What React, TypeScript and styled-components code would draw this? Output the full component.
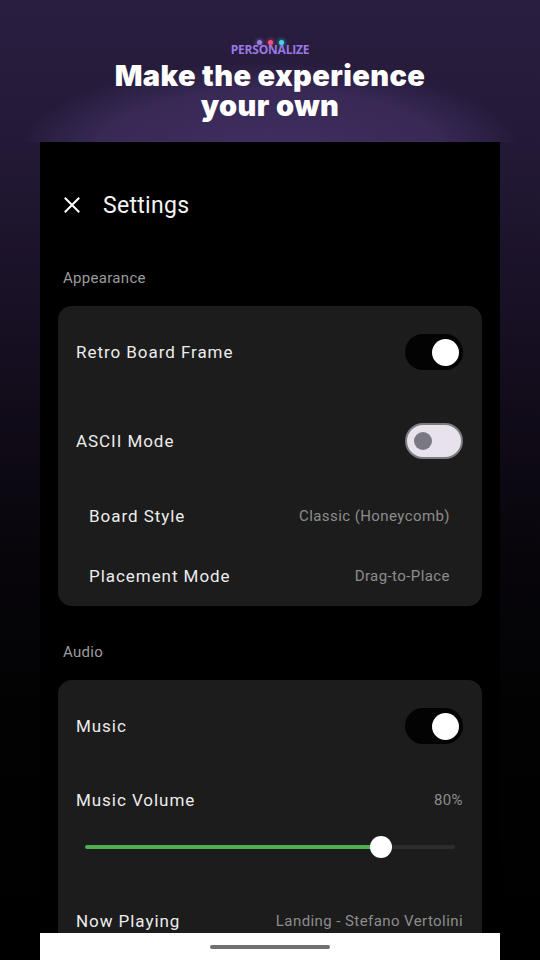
import React from "react";
import styled, { createGlobalStyle } from "styled-components";

const Global = createGlobalStyle`
  html, body { margin: 0; padding: 0; background: #000; }
  body { font-family: Roboto, "Noto Sans", sans-serif; -webkit-font-smoothing: antialiased; }
  * { box-sizing: border-box; }
`;

const Screen = styled.div`
  width: 540px;
  height: 960px;
  overflow: hidden;
  display: flex;
  flex-direction: column;
  background: linear-gradient(180deg, #2a1e40 0px, #231936 150px, #170f22 330px, #07050a 560px, #020202 720px, #000 960px);
`;

const Hero = styled.header`
  height: 142px;
  flex: 0 0 142px;
  display: flex;
  flex-direction: column;
  align-items: center;
  padding-top: 40px;
  background: radial-gradient(ellipse 250px 90px at 50% 152px, rgba(66, 48, 100, 0.95) 0%, rgba(60, 44, 92, 0.8) 70%, rgba(52, 38, 80, 0.3) 94%, rgba(52, 38, 80, 0) 100%);
`;

const Dots = styled.div`
  display: flex;
  gap: 6px;
  height: 5px;
`;

const Dot = styled.span<{ $c: string }>`
  width: 5px;
  height: 5px;
  border-radius: 50%;
  background: ${(p) => p.$c};
  box-shadow: 0 0 4px ${(p) => p.$c};
`;

const Eyebrow = styled.div`
  font-family: "Open Sans", "Noto Sans", sans-serif;
  font-weight: 700;
  font-size: 12px;
  line-height: 14px;
  color: #9a78e4;
  letter-spacing: -0.2px;
  margin-top: -2px;
`;

const Title = styled.h1`
  margin: 4px 0 0;
  font-family: Inter, "Noto Sans", sans-serif;
  font-weight: 900;
  font-size: 29px;
  line-height: 30px;
  color: #ffffff;
  text-align: center;
  letter-spacing: 0.4px;
`;

const TitleLine = styled.span`
  display: block;
`;

const Panel = styled.main`
  flex: 1;
  margin: 0 40px;
  background: #000;
  display: flex;
  flex-direction: column;
  overflow: hidden;
`;

const Scroll = styled.div`
  flex: 1;
  overflow: hidden;
  display: flex;
  flex-direction: column;
`;

const TopBar = styled.div`
  height: 56px;
  margin-top: 35px;
  display: flex;
  align-items: center;
  padding-left: 24px;
  gap: 23px;
  flex: 0 0 auto;
`;

const Heading = styled.div`
  font-size: 23px;
  color: #f4f4f4;
  font-weight: 400;
  letter-spacing: 0.3px;
`;

const SectionLabel = styled.div<{ $mt: number }>`
  margin-top: ${(p) => p.$mt}px;
  padding-left: 23px;
  font-size: 15px;
  line-height: 20px;
  color: #9c9c9c;
  letter-spacing: 0.3px;
  flex: 0 0 auto;
`;

const Card = styled.section`
  margin: 18px 18px 0;
  background: #1c1c1c;
  border-radius: 14px;
  display: flex;
  flex-direction: column;
  padding-top: 10px;
  flex: 0 0 auto;
`;

const Row = styled.div<{ $h: number; $mt?: number; $inset?: number }>`
  height: ${(p) => p.$h}px;
  margin-top: ${(p) => p.$mt ?? 0}px;
  padding: 0 ${(p) => p.$inset ?? 19}px 0 ${(p) => (p.$inset ?? 19) - 1}px;
  display: flex;
  align-items: center;
  justify-content: space-between;
  flex: 0 0 auto;
`;

const Label = styled.span`
  font-size: 17px;
  color: #ececec;
  letter-spacing: 0.95px;
`;

const Value = styled.span<{ $size?: number }>`
  font-size: ${(p) => p.$size ?? 15}px;
  color: #8c8c8c;
  letter-spacing: 0.42px;
`;

const Track = styled.div<{ $on: boolean }>`
  width: 58px;
  height: 36px;
  border-radius: 18px;
  display: flex;
  align-items: center;
  justify-content: ${(p) => (p.$on ? "flex-end" : "flex-start")};
  padding: 0 ${(p) => (p.$on ? 4 : 7)}px;
  background: ${(p) => (p.$on ? "#030303" : "#e7e2ec")};
  border: ${(p) => (p.$on ? "none" : "2px solid #7c7b80")};
`;

const Knob = styled.span<{ $on: boolean }>`
  width: ${(p) => (p.$on ? 27 : 18)}px;
  height: ${(p) => (p.$on ? 27 : 18)}px;
  border-radius: 50%;
  background: ${(p) => (p.$on ? "#ffffff" : "#7a7880")};
`;

const Toggle = ({ on }: { on: boolean }) => (
  <Track $on={on}>
    <Knob $on={on} />
  </Track>
);

const SliderRow = styled.div`
  height: 30px;
  margin-top: 17px;
  padding: 0 27px;
  display: flex;
  align-items: center;
  flex: 0 0 auto;
`;

const Fill = styled.div`
  height: 4px;
  border-radius: 2px 0 0 2px;
  background: #4caf50;
`;

const Rest = styled.div`
  flex: 1;
  height: 4px;
  border-radius: 0 2px 2px 0;
  background: #2d2d2d;
`;

const Thumb = styled.div`
  width: 22px;
  height: 22px;
  border-radius: 50%;
  background: #ffffff;
  margin: 0 -11px;
  position: relative;
  z-index: 1;
  flex: 0 0 auto;
`;

const NavBar = styled.div`
  height: 27px;
  flex: 0 0 27px;
  background: #ffffff;
  display: flex;
  align-items: center;
  justify-content: center;
`;

const Pill = styled.div`
  width: 120px;
  height: 4px;
  border-radius: 2px;
  background: #707070;
`;

const CloseIcon = () => (
  <svg width="16" height="16" viewBox="0 0 16 16" fill="none">
    <path d="M1.5 1.5 L14.5 14.5 M14.5 1.5 L1.5 14.5" stroke="#ffffff" strokeWidth="2" strokeLinecap="square" />
  </svg>
);

export default function App() {
  const volume = 80;
  return (
    <>
      <Global />
      <Screen>
        <Hero>
          <Dots>
            <Dot $c="#9b7be8" />
            <Dot $c="#f2547e" />
            <Dot $c="#3ed9ea" />
          </Dots>
          <Eyebrow>PERSONALIZE</Eyebrow>
          <Title>
            <TitleLine>Make the experience</TitleLine>
            <TitleLine>your own</TitleLine>
          </Title>
        </Hero>
        <Panel>
          <Scroll>
            <TopBar>
              <CloseIcon />
              <Heading>Settings</Heading>
            </TopBar>
            <SectionLabel $mt={35}>Appearance</SectionLabel>
            <Card>
              <Row $h={72}>
                <Label>Retro Board Frame</Label>
                <Toggle on />
              </Row>
              <Row $h={72} $mt={17}>
                <Label>ASCII Mode</Label>
                <Toggle on={false} />
              </Row>
              <Row $h={60} $mt={9} $inset={32}>
                <Label>Board Style</Label>
                <Value>Classic (Honeycomb)</Value>
              </Row>
              <Row $h={60} $inset={32}>
                <Label>Placement Mode</Label>
                <Value>Drag-to-Place</Value>
              </Row>
            </Card>
            <SectionLabel $mt={36}>Audio</SectionLabel>
            <Card>
              <Row $h={72}>
                <Label>Music</Label>
                <Toggle on />
              </Row>
              <Row $h={30} $mt={23}>
                <Label>Music Volume</Label>
                <Value $size={15}>{volume}%</Value>
              </Row>
              <SliderRow>
                <Fill style={{ width: `${volume}%` }} />
                <Thumb />
                <Rest />
              </SliderRow>
              <Row $h={72} $mt={23}>
                <Label>Now Playing</Label>
                <Value>Landing - Stefano Vertolini</Value>
              </Row>
            </Card>
          </Scroll>
          <NavBar>
            <Pill />
          </NavBar>
        </Panel>
      </Screen>
    </>
  );
}
